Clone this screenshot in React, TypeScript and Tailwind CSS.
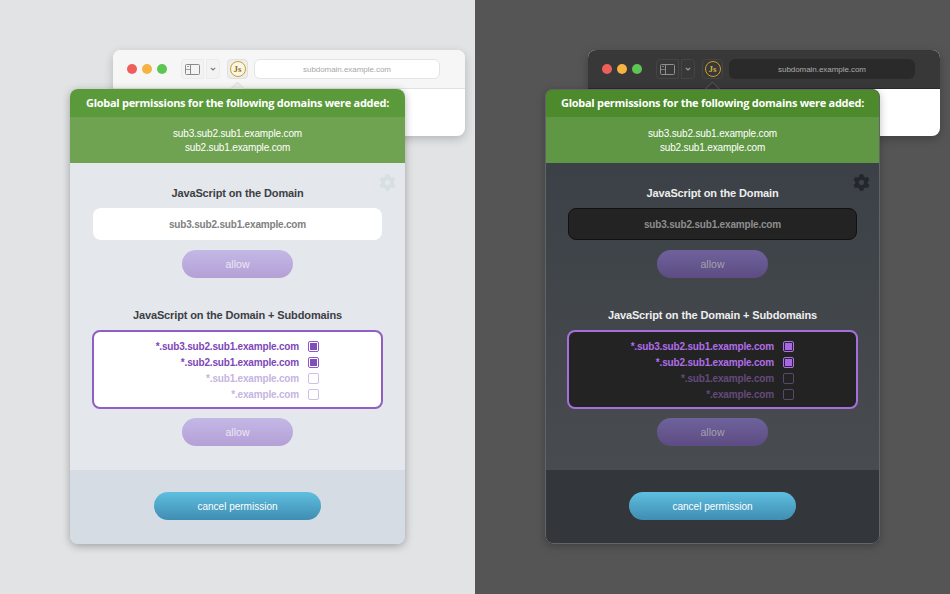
import { FaCog } from "react-icons/fa";

const sans = "font-['Liberation_Sans',Arial,sans-serif]";

const domains = [
  { name: "*.sub3.sub2.sub1.example.com", on: true },
  { name: "*.sub2.sub1.example.com", on: true },
  { name: "*.sub1.example.com", on: false },
  { name: "*.example.com", on: false },
];

function SidebarIcon({ dark }: { dark: boolean }) {
  const c = dark ? "#8f8f8f" : "#8a8a8a";
  return (
    <svg width="15" height="11" viewBox="0 0 15 11" fill="none">
      <rect x="0.5" y="0.5" width="14" height="10" rx="1" stroke={c} />
      <path d="M5.5 0.5V10.5" stroke={c} />
      <path d="M0.5 5.5H5.5" stroke={c} strokeWidth="0.8" />
      <path d="M2 2.5H4" stroke={c} strokeWidth="0.8" />
    </svg>
  );
}

function JsBadge({ dark }: { dark: boolean }) {
  return (
    <div
      className={
        dark
          ? "flex size-[16px] items-center justify-center rounded-full border-[1.5px] border-[#c9a227] font-['Liberation_Serif',serif] text-[9px] font-bold leading-none text-[#d3ad3a]"
          : "flex size-[16px] items-center justify-center rounded-full border-[1.5px] border-[#c4a033] bg-[#fbf6e4] font-['Liberation_Serif',serif] text-[9px] font-bold leading-none text-[#8f7226]"
      }
    >
      Js
    </div>
  );
}

function Toolbar({ dark }: { dark: boolean }) {
  const btn = dark ? "border-[#444444] bg-[#383838]" : "border-[#ebebeb] bg-[#f3f3f3]";
  return (
    <div
      className={
        dark
          ? "flex h-[39px] items-center border-b border-[#2a2a2a] bg-[#383838] pl-[14px]"
          : "flex h-[39px] items-center border-b border-[#e2e2e2] bg-[#f6f6f6] pl-[14px]"
      }
    >
      <div className="flex gap-[5px]">
        <div className="size-[10px] rounded-full bg-[#ee5f5b]" />
        <div className="size-[10px] rounded-full bg-[#f5b342]" />
        <div className="size-[10px] rounded-full bg-[#5ec454]" />
      </div>
      <div className={`ml-[14px] flex h-[20px] w-[23px] items-center justify-center rounded-l border ${btn}`}>
        <SidebarIcon dark={dark} />
      </div>
      <div className={`ml-[2px] flex h-[20px] w-[14px] items-center justify-center rounded-r border ${btn}`}>
        <svg width="6" height="4" viewBox="0 0 6 4" fill="none">
          <path d="M0.8 0.8L3 3L5.2 0.8" stroke={dark ? "#a0a0a0" : "#777777"} strokeWidth="1.1" />
        </svg>
      </div>
      <div
        className={
          dark
            ? "ml-[7px] flex h-[20px] w-[21px] items-center justify-center rounded border border-[#444444] bg-[#383838]"
            : "ml-[7px] flex h-[20px] w-[21px] items-center justify-center rounded border border-[#e0e0e0] bg-[#ededed]"
        }
      >
        <JsBadge dark={dark} />
      </div>
      <div
        className={
          dark
            ? `ml-[6px] flex h-[20px] w-[186px] items-center justify-center rounded-md bg-[#2a2a2a] pt-[1px] text-[8px] tracking-[-0.05px] text-[#aaaaaa] ${sans}`
            : `ml-[6px] flex h-[20px] w-[186px] items-center justify-center rounded-md border border-[#e3e3e3] bg-white pt-[1px] text-[8px] tracking-[-0.05px] text-[#a8a8a8] ${sans}`
        }
      >
        subdomain.example.com
      </div>
    </div>
  );
}

function AllowButton({ dark }: { dark: boolean }) {
  return (
    <button
      className={
        dark
          ? "mx-auto block h-[28px] w-[111px] rounded-[14px] bg-gradient-to-b from-[#6f629c] to-[#5d4c83] pt-[1px] text-[10.5px] text-[#a5a0ad]"
          : "mx-auto block h-[28px] w-[111px] rounded-[14px] bg-gradient-to-b from-[#c3b8e6] to-[#b4a0d6] pt-[1px] text-[10.5px] text-[#ece7f5]"
      }
    >
      allow
    </button>
  );
}

function Checkbox({ on, dark }: { on: boolean; dark: boolean }) {
  if (on) {
    return (
      <div
        className={
          dark
            ? "flex size-[11px] items-center justify-center rounded-[2px] border border-[#a974e0] bg-[#2a2530]"
            : "flex size-[11px] items-center justify-center rounded-[2px] border border-[#8a5ac2] bg-white"
        }
      >
        <div className={dark ? "size-[7px] bg-[#a966e6]" : "size-[7px] bg-[#7f4fbd]"} />
      </div>
    );
  }
  return (
    <div
      className={
        dark
          ? "size-[11px] rounded-[2px] border border-[#5b4670]"
          : "size-[11px] rounded-[2px] border border-[#cfc0e6]"
      }
    />
  );
}

function Panel({ dark }: { dark: boolean }) {
  const title = dark
    ? "text-center text-[11px] font-bold leading-none tracking-[-0.12px] text-[#eeeeee]"
    : "text-center text-[11px] font-bold leading-none tracking-[-0.12px] text-[#3c3f44]";
  return (
    <div
      className={
        dark
          ? `absolute left-[70px] top-[89px] w-[335px] overflow-hidden rounded-lg shadow-[0_2px_8px_rgba(0,0,0,0.25)] ${sans}`
          : `absolute left-[70px] top-[89px] w-[335px] overflow-hidden rounded-lg shadow-[0_2px_8px_rgba(0,0,0,0.3)] ${sans}`
      }
    >
      <div
        className={
          dark
            ? "flex h-[28px] items-center justify-center whitespace-nowrap bg-[#4c8a2b] pt-[1px] font-['Open_Sans',sans-serif] text-[11px] font-bold tracking-[-0.28px] text-white"
            : "flex h-[28px] items-center justify-center whitespace-nowrap bg-[#5b9a3b] pt-[1px] font-['Open_Sans',sans-serif] text-[11px] font-bold tracking-[-0.28px] text-white"
        }
      >
        Global permissions for the following domains were added:
      </div>
      <div
        className={
          dark
            ? "flex h-[46px] flex-col justify-center bg-[#5f9744] pt-[1px] text-center text-[10px] leading-[14px] tracking-[-0.15px] text-white"
            : "flex h-[46px] flex-col justify-center bg-[#6fa352] pt-[1px] text-center text-[10px] leading-[14px] tracking-[-0.15px] text-white"
        }
      >
        <div>sub3.sub2.sub1.example.com</div>
        <div>sub2.sub1.example.com</div>
      </div>
      <div
        className={
          dark
            ? "relative h-[307px] bg-gradient-to-b from-[#3c4147] to-[#484c50] px-[22px] pt-[25px]"
            : "relative h-[307px] bg-[#e4e7ec] px-[22px] pt-[25px]"
        }
      >
        <FaCog
          className={
            dark
              ? "absolute right-[10px] top-[11px] size-[17px] text-[#23272b]"
              : "absolute right-[9px] top-[11px] size-[17px] text-[#d6dfe2]"
          }
        />
        <div className={title}>JavaScript on the Domain</div>
        <div
          className={
            dark
              ? "mx-[1px] mt-[9px] flex h-[32px] items-center justify-center rounded-lg border border-[#111111] bg-[#232323] pt-[1px] text-[10px] font-bold tracking-[-0.18px] text-[#8e8e8e]"
              : "mx-[1px] mt-[9px] flex h-[32px] items-center justify-center rounded-lg bg-white pt-[1px] text-[10px] font-bold tracking-[-0.18px] text-[#808080]"
          }
        >
          sub3.sub2.sub1.example.com
        </div>
        <div className="mt-[10px]">
          <AllowButton dark={dark} />
        </div>
        <div className={`mt-[32px] ${title}`}>JavaScript on the Domain + Subdomains</div>
        <div
          className={
            dark
              ? "mt-[9px] flex h-[79px] flex-col justify-center rounded-lg border-2 border-[#a66fdc] bg-[#232323] pr-[62px] pt-[2px]"
              : "mt-[9px] flex h-[79px] flex-col justify-center rounded-lg border-2 border-[#8f5fc4] bg-white pr-[62px] pt-[2px]"
          }
        >
          {domains.map((d) => (
            <div key={d.name} className="flex h-[16px] items-center justify-end gap-[9px]">
              <span
                className={
                  dark
                    ? d.on
                      ? "text-[10px] font-bold tracking-[-0.18px] text-[#b06ee8]"
                      : "text-[10px] font-bold tracking-[-0.18px] text-[#634a7c]"
                    : d.on
                      ? "text-[10px] font-bold tracking-[-0.18px] text-[#7e46b8]"
                      : "text-[10px] font-bold tracking-[-0.18px] text-[#c6b4e2]"
                }
              >
                {d.name}
              </span>
              <Checkbox on={d.on} dark={dark} />
            </div>
          ))}
        </div>
        <div className="mt-[9px]">
          <AllowButton dark={dark} />
        </div>
      </div>
      <div
        className={
          dark
            ? "flex h-[74px] items-center justify-center bg-[#33373b] pb-[2px]"
            : "flex h-[74px] items-center justify-center bg-[#d5dce3] pb-[2px]"
        }
      >
        <button className="h-[28px] w-[167px] rounded-[14px] bg-gradient-to-b from-[#5fbfe0] to-[#3f8db2] text-[10px] text-white">
          cancel permission
        </button>
      </div>
      {dark && <div className="pointer-events-none absolute inset-0 rounded-lg border border-[#626568]" />}
    </div>
  );
}

function Half({ dark }: { dark: boolean }) {
  return (
    <div className={dark ? "relative h-[594px] w-[475px] bg-[#555555]" : "relative h-[594px] w-[475px] bg-[#e2e3e5]"}>
      {/* browser window behind the popup */}
      <div
        className={
          dark
            ? "absolute left-[113px] top-[50px] h-[86px] w-[352px] overflow-hidden rounded-lg bg-white shadow-[0_3px_10px_rgba(0,0,0,0.25)]"
            : "absolute left-[113px] top-[50px] h-[86px] w-[352px] overflow-hidden rounded-lg bg-white shadow-[0_3px_10px_rgba(0,0,0,0.2)]"
        }
      >
        <Toolbar dark={dark} />
      </div>
      {/* arrow above the popup */}
      <svg className="absolute left-[229px] top-[81px]" width="17" height="9" viewBox="0 0 17 9">
        <path
          d="M0.5 9L8.5 1L16.5 9Z"
          fill={dark ? "#333333" : "#ececec"}
          stroke={dark ? "#5c5c5c" : "#dddddd"}
        />
      </svg>
      <Panel dark={dark} />
    </div>
  );
}

export default function App() {
  return (
    <div className="flex h-[594px] w-[950px] overflow-hidden">
      <Half dark={false} />
      <Half dark={true} />
    </div>
  );
}
